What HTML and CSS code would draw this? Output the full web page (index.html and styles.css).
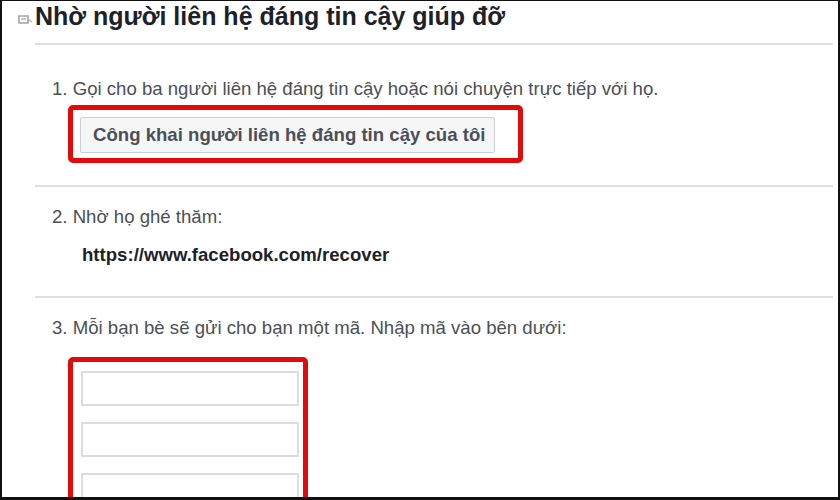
FILE: index.html
```html
<!DOCTYPE html>
<html lang="vi">
<head>
<meta charset="utf-8">
<title>Nhờ người liên hệ đáng tin cậy giúp đỡ</title>
<link rel="stylesheet" href="styles.css">
</head>
<body>
<div class="frame">
  <div class="page">
    <header class="head">
      <div class="title-row">
        <svg class="mark" width="16" height="12" viewBox="0 0 16 12" aria-hidden="true">
          <path d="M2 3 H11 V10 H2 Z" fill="none" stroke="#8a8d92" stroke-width="1.6"/>
          <path d="M4 6 H9 M11 6 L15 9" stroke="#9a9da2" stroke-width="1.4" fill="none"/>
        </svg>
        <h1 class="title">Nhờ người liên hệ đáng tin cậy giúp đỡ</h1>
      </div>
    </header>

    <section class="step step-first">
      <p class="step-text">1. Gọi cho ba người liên hệ đáng tin cậy hoặc nói chuyện trực tiếp với họ.</p>
      <div class="mark-box mark-box-btn">
        <button class="btn" type="button">Công khai người liên hệ đáng tin cậy của tôi</button>
      </div>
    </section>

    <section class="step step-second">
      <p class="step-text">2. Nhờ họ ghé thăm:</p>
      <p class="link">https://www.facebook.com/recover</p>
    </section>

    <section class="step step-third">
      <p class="step-text">3. Mỗi bạn bè sẽ gửi cho bạn một mã. Nhập mã vào bên dưới:</p>
      <div class="mark-box mark-box-codes">
        <input class="code" type="text" aria-label="Mã 1">
        <input class="code" type="text" aria-label="Mã 2">
        <input class="code" type="text" aria-label="Mã 3">
      </div>
    </section>
  </div>
</div>
</body>
</html>
```

FILE: styles.css
```css
* {
  box-sizing: border-box;
}

html,
body {
  margin: 0;
  padding: 0;
  background: #ffffff;
}

.frame {
  width: 840px;
  height: 500px;
  overflow: hidden;
  background: #ffffff;
  border-style: solid;
  border-color: #111111;
  border-width: 1px 2px 3px 2px;
  font-family: "Liberation Sans", Arial, sans-serif;
}

.page {
  margin-left: 33px;
  width: 798px;
}

.head {
  padding-bottom: 12px;
  border-bottom: 2px solid #dddfe2;
}

.title-row {
  display: flex;
  align-items: center;
  margin-left: -18px;
  gap: 2px;
}

.mark {
  display: block;
  flex: none;
  margin-top: 6px;
  opacity: 0.8;
}

.title {
  margin: 0;
  font-size: 25px;
  line-height: 30px;
  font-weight: bold;
  color: #1d2129;
}

.step {
  padding-left: 17px;
  border-bottom: 2px solid #dddfe2;
}

.step-first {
  padding-top: 33px;
  padding-bottom: 22px;
}

.step-second {
  padding-top: 19px;
  padding-bottom: 30px;
}

.step-third {
  padding-top: 19px;
  border-bottom: none;
}

.step-text {
  margin: 0;
  font-size: 18.6px;
  line-height: 22px;
  color: #4b4f56;
}

.link {
  margin: 16px 0 0 30px;
  font-size: 18.6px;
  line-height: 22px;
  font-weight: bold;
  color: #1d2129;
}

.mark-box {
  display: inline-flex;
  border: 5px solid #e20a0a;
  border-radius: 5px;
}

.mark-box-btn {
  margin-top: 5px;
  margin-left: 16px;
  padding: 7px 23px 5px 7px;
}

.btn {
  width: 415px;
  height: 36px;
  margin: 0;
  padding: 0 12px;
  background: #f5f6f7;
  border: 1px solid #ccd0d5;
  border-radius: 2px;
  font-family: "Liberation Sans", Arial, sans-serif;
  font-size: 18.6px;
  font-weight: bold;
  color: #4b4f56;
  text-align: left;
  white-space: nowrap;
}

.mark-box-codes {
  flex-direction: column;
  gap: 16px;
  margin-top: 18px;
  margin-left: 16px;
  padding: 9px 4px 0 8px;
  height: 170px;
}

.code {
  display: block;
  width: 218px;
  height: 35px;
  margin: 0;
  flex: none;
  border: 2px solid #dcdde0;
  border-radius: 0;
  background: #ffffff;
}
```
